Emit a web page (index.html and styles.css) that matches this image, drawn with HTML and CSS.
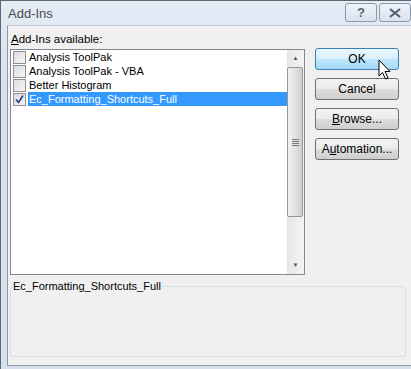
FILE: index.html
```html
<!DOCTYPE html>
<html>
<head>
  <title>Add-Ins</title>
  <meta charset="UTF-8">
  <link rel="stylesheet" href="styles.css">
</head>
<body>
  <div class="window">
    <div class="titleBar">
      <span class="titleText">Add-Ins</span>
      <div class="captionButtons">
        <div class="captionBtn">?</div>
        <div class="captionBtn">
          <svg width="14" height="10" viewBox="0 0 14 10">
            <path d="M2 1 L12 9 M12 1 L2 9" stroke="#555f6e" stroke-width="2.2" fill="none"/>
          </svg>
        </div>
      </div>
    </div>

    <div class="client">
      <div class="topRow">
        <div class="listColumn">
          <div class="label"><u>A</u>dd-Ins available:</div>
          <div class="listBox">
            <div class="items">
              <div class="item"><span class="check"></span><span class="itemText">Analysis ToolPak</span></div>
              <div class="item"><span class="check"></span><span class="itemText">Analysis ToolPak - VBA</span></div>
              <div class="item"><span class="check"></span><span class="itemText">Better Histogram</span></div>
              <div class="item selected">
                <span class="check">
                  <svg width="11" height="11" viewBox="0 0 11 11">
                    <path d="M2 5.5 L4.5 8.5 L9 1.5" stroke="#2d3d87" stroke-width="1.6" fill="none"/>
                  </svg>
                </span>
                <span class="itemText">Ec_Formatting_Shortcuts_Full</span>
              </div>
            </div>
            <div class="scrollBar">
              <div class="arrowBtn">&#9650;</div>
              <div class="track">
                <div class="thumb"><div class="grip"></div></div>
              </div>
              <div class="arrowBtn">&#9660;</div>
            </div>
          </div>
        </div>

        <div class="buttonColumn">
          <button class="btn btnHot">OK</button>
          <button class="btn">Cancel</button>
          <button class="btn"><u>B</u>rowse...</button>
          <button class="btn">A<u>u</u>tomation...</button>
        </div>
      </div>

      <div class="groupBox">
        <span class="groupTitle">Ec_Formatting_Shortcuts_Full</span>
      </div>
    </div>

    <svg class="cursor" width="14" height="22" viewBox="0 0 14 22">
      <path d="M1 1 L1 17 L4.5 13.5 L7.5 20 L10 19 L7 12.5 L12 12.5 Z" fill="#fff" stroke="#000" stroke-width="1"/>
    </svg>
  </div>
</body>
</html>
```

FILE: styles.css
```css
body {
  margin: 0;
  background: #ffffff;
  font-family: "Liberation Sans", Arial, sans-serif;
  font-size: 12px;
  color: #000;
}
.window {
  position: relative;
  width: 407px;
  height: 368px;
  padding: 0 1px 0 6px;
  border: 1px solid #5d6672;
  border-bottom: none;
  border-radius: 0 6px 0 0;
  background: linear-gradient(#e4ecf6, #d9e3f0 60px, #d7e1ee);
  display: flex;
  flex-direction: column;
}
.titleBar {
  height: 24px;
  display: flex;
  align-items: flex-start;
}
.titleText {
  margin: 5px 0 0 1px;
  font-size: 13px;
  color: #4c4c4c;
}
.captionButtons {
  margin: 2px 3px 0 auto;
  display: flex;
  gap: 2px;
}
.captionBtn {
  width: 30px;
  height: 17px;
  border: 1px solid #8c99aa;
  border-radius: 3px;
  background: linear-gradient(#eef3f9, #d9e2ee);
  color: #5a6473;
  font-size: 13px;
  font-weight: bold;
  text-align: center;
  line-height: 17px;
  display: flex;
  align-items: center;
  justify-content: center;
}
.client {
  flex: 1;
  margin-bottom: 3px;
  border: 1px solid #8e9aa8;
  border-top-color: #c3ccd7;
  background: #f0f0f0;
  padding: 0 7px 0 2px;
  display: flex;
  flex-direction: column;
}
.topRow {
  display: flex;
  gap: 10px;
}
.listColumn {
  width: 295px;
}
.label {
  margin: 7px 0 0 1px;
  height: 16px;
  font-size: 11.5px;
}
.listBox {
  height: 224px;
  border: 1px solid #828790;
  background: #fff;
  display: flex;
}
.items {
  flex: 1;
  font-size: 11px;
}
.item {
  height: 14px;
  display: flex;
  align-items: center;
}
.check {
  width: 11px;
  height: 11px;
  margin: 0 2px 0 2px;
  border: 1px solid #8f8f8f;
  background: linear-gradient(135deg, #dcdcdc, #f6f6f6);
  display: flex;
}
.itemText {
  flex: 1;
  height: 14px;
  line-height: 14px;
  padding-left: 1px;
}
.selected .itemText {
  background: #3399ff;
  color: #fff;
}
.scrollBar {
  width: 17px;
  display: flex;
  flex-direction: column;
  background: linear-gradient(90deg, #e6e6e6, #f4f4f4);
}
.arrowBtn {
  height: 17px;
  font-size: 6px;
  color: #4d4d4d;
  text-align: center;
  line-height: 17px;
}
.track {
  flex: 1;
}
.thumb {
  height: 148px;
  margin-right: 1px;
  border: 1px solid #979797;
  border-radius: 2px;
  background: linear-gradient(90deg, #f1f1f1, #e2e2e2 50%, #cdcdcd);
  display: flex;
  align-items: center;
  justify-content: center;
}
.grip {
  width: 7px;
  height: 7px;
  background: repeating-linear-gradient(#7a7a7a 0 1px, transparent 1px 2px);
}
.buttonColumn {
  margin-top: 22px;
  display: flex;
  flex-direction: column;
  gap: 8px;
}
.btn {
  width: 84px;
  height: 22px;
  padding: 0;
  border: 1px solid #707070;
  border-radius: 3px;
  background: linear-gradient(#f2f2f2, #ebebeb 50%, #dddddd 51%, #cfcfcf);
  font-family: "Liberation Sans", Arial, sans-serif;
  font-size: 12px;
  color: #000;
}
.btnHot {
  border-color: #3c7fb1;
  background: linear-gradient(#eaf6fd, #d9f0fc 50%, #bee6fd 51%, #a7d9f5);
}
.groupBox {
  margin: 11px 0 0 0;
  height: 69px;
  border: 1px solid #d5dfe5;
  border-radius: 3px;
  padding-left: 1px;
}
.groupTitle {
  display: inline-block;
  margin-top: -8px;
  padding: 0 1px;
  background: #f0f0f0;
  font-size: 11px;
  line-height: 14px;
  vertical-align: top;
}
.cursor {
  position: absolute;
  left: 377px;
  top: 58px;
}
```
